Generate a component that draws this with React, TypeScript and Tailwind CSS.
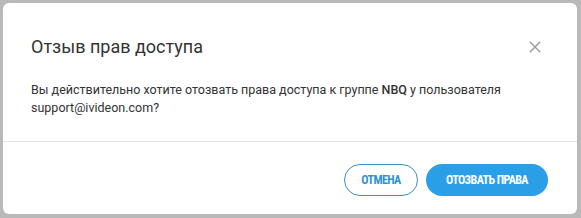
export default function App() {
  return (
    <div className="h-[218px] w-[581px] overflow-hidden bg-[#b9b9b9] pl-[3px] pt-[3px] font-['Roboto',sans-serif]">
      <div className="flex h-[211px] w-[574px] flex-col rounded-[6px] bg-white">
        <div className="flex items-start justify-between pl-[28px] pr-[36px] pt-[32px]">
          <h2 className="text-[18px] leading-[24px] text-[#333]">Отзыв прав доступа</h2>
          <button type="button" className="mt-[6px] flex h-[12px] w-[12px] items-center justify-center text-[#9a9a9a]">
            <svg width="12" height="12" viewBox="0 0 12 12" fill="none">
              <path d="M0.8 0.8L11.2 11.2M11.2 0.8L0.8 11.2" stroke="currentColor" strokeWidth="1.4" />
            </svg>
          </button>
        </div>
        <p className="mt-[22px] pl-[28px] pr-[24px] pb-[24px] text-[12.5px] leading-[18px] text-[#333]">
          Вы действительно хотите отозвать права доступа к группе <span className="font-medium">NBQ</span> у пользователя
          <br />
          support@ivideon.com?
        </p>
        <div className="h-px bg-[#e3e3e3]" />
        <div className="flex justify-end gap-[8px] pr-[29px] pt-[22px]">
          <button
            type="button"
            className="h-[32px] w-[74px] rounded-full border border-[#3a8fc6] text-[12px] font-bold tracking-[-0.6px] text-[#2f93d3] font-stretch-condensed"
          >
            ОТМЕНА
          </button>
          <button
            type="button"
            className="h-[32px] w-[122px] rounded-full bg-[#2a9fe8] text-[12px] font-bold tracking-[-0.6px] text-white font-stretch-condensed"
          >
            ОТОЗВАТЬ ПРАВА
          </button>
        </div>
      </div>
    </div>
  );
}
